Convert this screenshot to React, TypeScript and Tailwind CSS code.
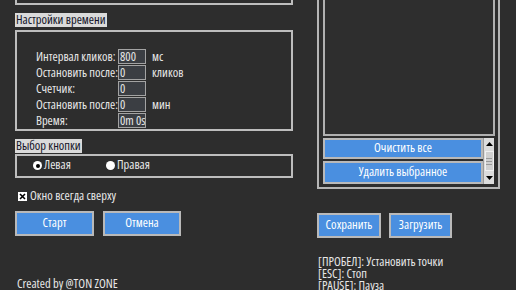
import React from "react";

const txt = "text-[12.5px] font-stretch-[78%]";

function Btn({ label, w, h = "h-[25px]" }: { label: string; w: string; h?: string }) {
  return (
    <div
      className={`${w} ${h} bg-[#4a8fe0] border-2 border-[#b9b9b9] flex items-center justify-center text-white text-[12.5px] font-stretch-[82%] leading-none`}
    >
      {label}
    </div>
  );
}

function Row({ label, value, unit }: { label: string; value: string; unit?: string }) {
  return (
    <div className="flex items-center h-[16px]">
      <div className="w-[82px] text-[12.5px] font-stretch-[78%] leading-none text-[#e8e8e8] whitespace-nowrap">{label}</div>
      <div className="w-[28px] h-[15px] bg-[#3b3e43] border border-[#a3a3a3] text-[12.5px] font-stretch-[75%] leading-[13px] text-[#e6e6e6] pl-[1px] overflow-hidden whitespace-nowrap">
        {value}
      </div>
      {unit && <div className="ml-[6px] text-[12.5px] font-stretch-[78%] leading-none text-[#e8e8e8]">{unit}</div>}
    </div>
  );
}

export default function App() {
  return (
    <div className="w-[516px] h-[290px] overflow-hidden bg-[#2d2d2d] flex font-['Open_Sans',sans-serif]">
      {/* Left column */}
      <div className="w-[293px] pl-[15px] flex flex-col shrink-0">
        <div className="h-[5px] border-x-2 border-b-2 border-[#bdbdbd]" />
        <div className="mt-[8px] h-[14px] flex">
          <div className="bg-[#dadada] text-[#141428] text-[12.5px] font-stretch-[80%] leading-[14px] px-[1px]">Настройки времени</div>
        </div>
        <div className="mt-[3px] h-[104px] border-2 border-[#bdbdbd] pt-[17px] pl-[19px] flex flex-col">
          <Row label="Интервал кликов:" value="800" unit="мс" />
          <Row label="Остановить после:" value="0" unit="кликов" />
          <Row label="Счетчик:" value="0" />
          <Row label="Остановить после:" value="0" unit="мин" />
          <Row label="Время:" value="0m 0s" />
        </div>
        <div className="mt-[8px] h-[14px] flex">
          <div className="bg-[#dadada] text-[#141428] text-[12.5px] font-stretch-[80%] leading-[14px] px-[1px]">Выбор кнопки</div>
        </div>
        <div className="mt-[1px] h-[25px] border-2 border-[#bdbdbd] flex items-center pl-[16px]">
          <div className="flex items-center w-[73px]">
            <div className="w-[9px] h-[9px] rounded-full bg-white flex items-center justify-center">
              <div className="w-[4px] h-[4px] rounded-full bg-black" />
            </div>
            <span className={`ml-[2px] ${txt} leading-none text-[#e8e8e8]`}>Левая</span>
          </div>
          <div className="flex items-center">
            <div className="w-[9px] h-[9px] rounded-full bg-white" />
            <span className={`ml-[2px] ${txt} leading-none text-[#e8e8e8]`}>Правая</span>
          </div>
        </div>
        <div className="mt-[13px] flex items-center pl-[3px] h-[11px]">
          <div className="w-[9px] h-[9px] bg-white flex items-center justify-center">
            <svg width="7" height="7" viewBox="0 0 7 7">
              <path d="M1 1L6 6M6 1L1 6" stroke="black" strokeWidth="1.6" />
            </svg>
          </div>
          <span className={`ml-[3px] ${txt} leading-none text-[#e8e8e8]`}>Окно всегда сверху</span>
        </div>
        <div className="mt-[9px] flex gap-[9px]">
          <Btn label="Старт" w="w-[79px]" />
          <Btn label="Отмена" w="w-[78px]" />
        </div>
        <div className="mt-[42px] pl-[2px] text-[12.5px] font-stretch-[87%] leading-none text-[#e8e8e8] whitespace-nowrap">Created by @TON ZONE</div>
      </div>

      {/* Right column */}
      <div className="ml-[24px] w-[183px] flex flex-col shrink-0">
        <div className="h-[189px] border-x-2 border-b-2 border-[#b5b5b5] pl-[4px] pr-[3px] pb-[3px] flex flex-col">
          <div className="h-[136px] border-x-2 border-b-2 border-[#b0b0b0] bg-[#2e2e2e]" />
          <div className="mt-[2px] flex">
            <div className="w-[160px] flex flex-col gap-[2px]">
              <Btn label="Очистить все" w="w-[160px]" h="h-[21px]" />
              <Btn label="Удалить выбранное" w="w-[160px]" h="h-[23px]" />
            </div>
            <div className="w-[11px] h-[46px] bg-[#dcdcdc] flex flex-col items-center justify-between border-l border-[#9a9a9a]">
              <svg width="9" height="8" viewBox="0 0 9 8" className="mt-[2px]">
                <path d="M1 6L4.5 2L8 6Z" fill="black" />
              </svg>
              <div className="w-[9px] h-[20px] bg-[#d0d0d0] border border-[#f0f0f0] flex flex-col items-center justify-center gap-[2px]">
                <div className="w-[6px] h-px bg-[#999]" />
                <div className="w-[6px] h-px bg-[#999]" />
                <div className="w-[6px] h-px bg-[#999]" />
              </div>
              <svg width="9" height="8" viewBox="0 0 9 8" className="mb-[2px]">
                <path d="M1 2L4.5 6L8 2Z" fill="black" />
              </svg>
            </div>
          </div>
        </div>
        <div className="mt-[24px] flex gap-[8px]">
          <Btn label="Сохранить" w="w-[64px]" />
          <Btn label="Загрузить" w="w-[63px]" />
        </div>
        <div className="mt-[18px] pl-[1px] flex flex-col text-[12.5px] font-stretch-[78%] leading-[12px] text-[#e8e8e8] whitespace-nowrap">
          <div>[ПРОБЕЛ]: Установить точки</div>
          <div>[ESC]: Стоп</div>
          <div>[PAUSE]: Пауза</div>
        </div>
      </div>
    </div>
  );
}
